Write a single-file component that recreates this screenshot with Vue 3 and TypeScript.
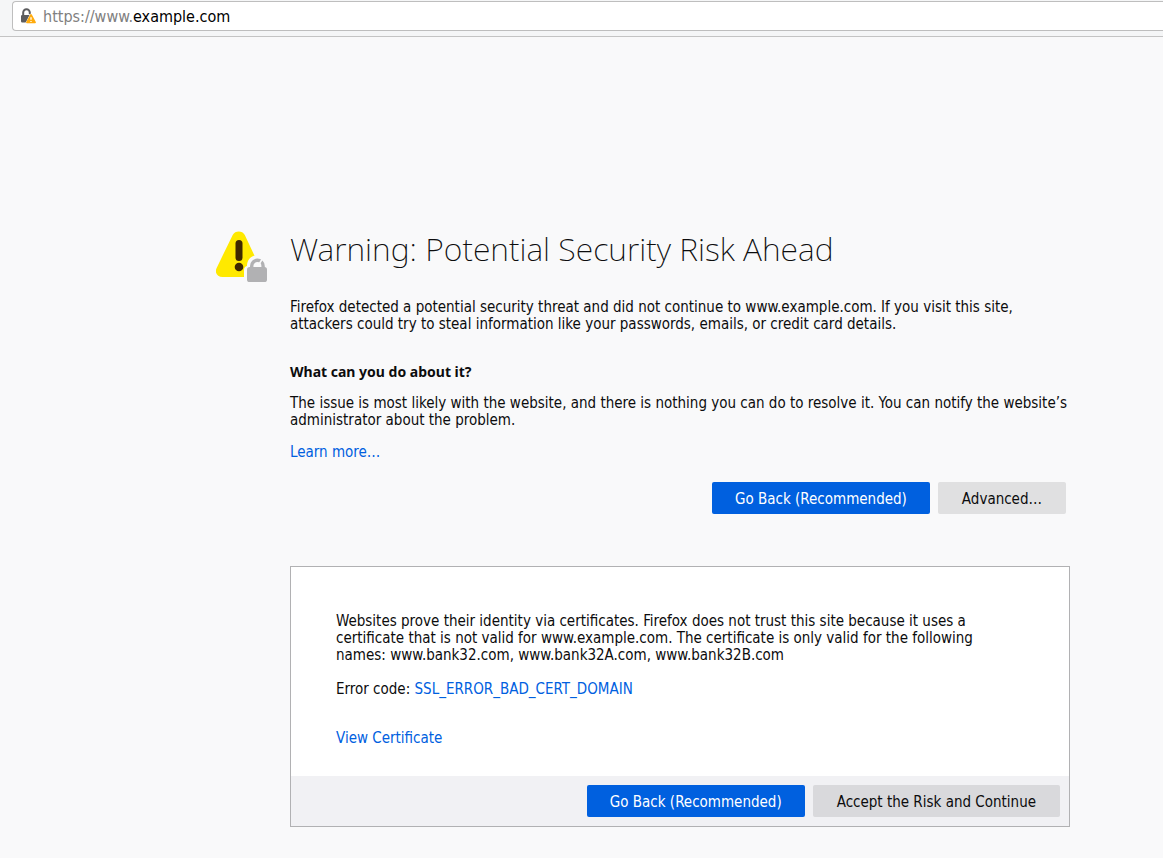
<script setup lang="ts">
import { ref } from 'vue'

const host = ref<string>('example.com')
const validNames: string[] = ['www.bank32.com', 'www.bank32A.com', 'www.bank32B.com']
const errorCode = 'SSL_ERROR_BAD_CERT_DOMAIN'
</script>

<template>
  <div class="window">
    <header class="toolbar">
      <label class="urlbar">
        <svg class="identity" viewBox="0 0 16 16" aria-hidden="true">
          <path d="M3.2 7.5V4.6a3.3 3.3 0 0 1 6.6-.1v1.7" fill="none" stroke="#5c5c5e" stroke-width="2" />
          <path d="M2.4 7h7.2L6 14.4H2.2A1.2 1.2 0 0 1 1 13.2V8.3A1.3 1.3 0 0 1 2.4 7z" fill="#5c5c5e" />
          <path d="M10.6 5.4 16 15.4H5.2z" fill="#f9f9fa" />
          <path d="M10.2 6.4a.9.9 0 0 1 1.6 0l4 7.5a.9.9 0 0 1-.8 1.4H7a.9.9 0 0 1-.8-1.4z" fill="#ffab0d" />
          <path d="M11 9.2v2.6M11 13v1.1" fill="none" stroke="#fff" stroke-width="1.3" />
        </svg>
        <span class="scheme">https://www.</span>
        <input v-model="host" class="host" type="text" aria-label="Address" spellcheck="false" />
      </label>
    </header>

    <main class="page">
      <svg class="warning" viewBox="0 0 52 52" aria-hidden="true">
        <path
          d="M16.7 3.9C19.2-.6 26.3-.6 28.8 3.9L44 36.5c3.1 5.8.3 9.5-5.2 9.5H6.5C1.2 46-1.9 41.5.9 36.4z"
          fill="#ffe900"
        />
        <path d="M23 12.6v13.8" fill="none" stroke="#3e2800" stroke-width="7" stroke-linecap="round" />
        <circle cx="23" cy="36" r="4.3" fill="#3e2800" />
        <path d="M28 52V39c0-2 1-3.4 3-4 0-6 3.8-10.5 10-10.5 5 0 8.5 3 9.500 8l3 4V52z" fill="#f9f9fa" />
        <path d="M35.7 37v-2a5.7 5.7 0 0 1 11.4 0v2" fill="none" stroke="#b1b1b3" stroke-width="3.4" />
        <path d="M42.200 34.500 46 28.500" fill="none" stroke="#f9f9fa" stroke-width="1.600" />
        <rect x="31" y="36" width="20" height="15" rx="2.6" fill="#b1b1b3" />
      </svg>

      <div class="content">
        <h1>Warning: Potential Security Risk Ahead</h1>
        <p>
          Firefox detected a potential security threat and did not continue to www.example.com. If you visit this site,
          attackers could try to steal information like your passwords, emails, or credit card details.
        </p>

        <h2>What can you do about it?</h2>
        <p>
          The issue is most likely with the website, and there is nothing you can do to resolve it. You can notify the
          website’s administrator about the problem.
        </p>
        <p><a href="#learn-more">Learn more…</a></p>

        <div class="actions">
          <button type="button" class="primary">Go Back (Recommended)</button>
          <button type="button">Advanced…</button>
        </div>

        <section class="panel">
          <div class="details">
            <p>
              Websites prove their identity via certificates. Firefox does not trust this site because it uses a
              certificate that is not valid for www.example.com. The certificate is only valid for the following names:
              {{ validNames.join(', ') }}
            </p>
            <p class="code">Error code: <a href="#error-code">{{ errorCode }}</a></p>
            <p class="view"><a href="#certificate">View Certificate</a></p>
          </div>
          <div class="panel-actions">
            <button type="button" class="primary">Go Back (Recommended)</button>
            <button type="button">Accept the Risk and Continue</button>
          </div>
        </section>
      </div>
    </main>
  </div>
</template>

<style>
body {
  margin: 0;
  background: #f9f9fa;
}
</style>

<style scoped>
.window {
  min-height: 100vh;
  background: #f9f9fa;
  color: #0c0c0d;
  font-family: "DejaVu Sans Condensed", "Noto Sans", sans-serif;
  font-size: 15px;
  line-height: 17px;
}

.toolbar {
  padding: 1px 0 5px 12px;
  border-bottom: 1px solid #c4c4c4;
  background: #f5f6f7;
}

.urlbar {
  display: flex;
  align-items: center;
  box-sizing: border-box;
  height: 30px;
  padding-left: 7px;
  border: 1px solid #bebebe;
  border-right: 0;
  border-radius: 4px 0 0 4px;
  background: #fff;
  font-size: 16px;
}

.identity {
  width: 16px;
  height: 16px;
  margin-right: 7px;
}

.scheme {
  color: #808080;
}

.host {
  flex: 1;
  min-width: 0;
  padding: 0;
  border: 0;
  outline: 0;
  background: transparent;
  color: #000;
  font: inherit;
}

.page {
  display: flex;
  align-items: flex-start;
  gap: 22px;
  padding: 194px 93px 31px 216px;
}

.warning {
  flex: none;
  width: 52px;
  height: 52px;
}

.content {
  flex: 1;
  min-width: 0;
}

h1 {
  margin: 0 0 32px;
  font-family: "Noto Sans", sans-serif;
  font-size: 32px;
  font-weight: 200;
  line-height: 36px;
}

h2 {
  margin: 30px 0 15px;
  font-family: "Noto Sans", sans-serif;
  font-size: 14px;
  font-weight: 700;
  line-height: 17px;
}

p {
  margin: 0 0 15px;
}

a {
  color: #0060df;
  text-decoration: none;
}

.actions,
.panel-actions {
  display: flex;
  justify-content: flex-end;
  gap: 8px;
}

.actions {
  margin: 21px 4px 52px 0;
}

button {
  height: 32px;
  padding: 2px 24px 0;
  border: 0;
  border-radius: 2px;
  background: #0c0c0d1a;
  color: #0c0c0d;
  font: inherit;
}

.primary {
  padding: 2px 23px 0;
  background: #0060df;
  color: #fff;
}

.panel {
  border: 1px solid #b1b1b3;
  background: #fff;
}

.details {
  padding: 46px 45px 29px;
}

.code {
  margin: 17px 0 32px;
}

.view {
  margin: 0;
}

.panel-actions {
  padding: 9px;
  background: #f1f1f4;
}
</style>
